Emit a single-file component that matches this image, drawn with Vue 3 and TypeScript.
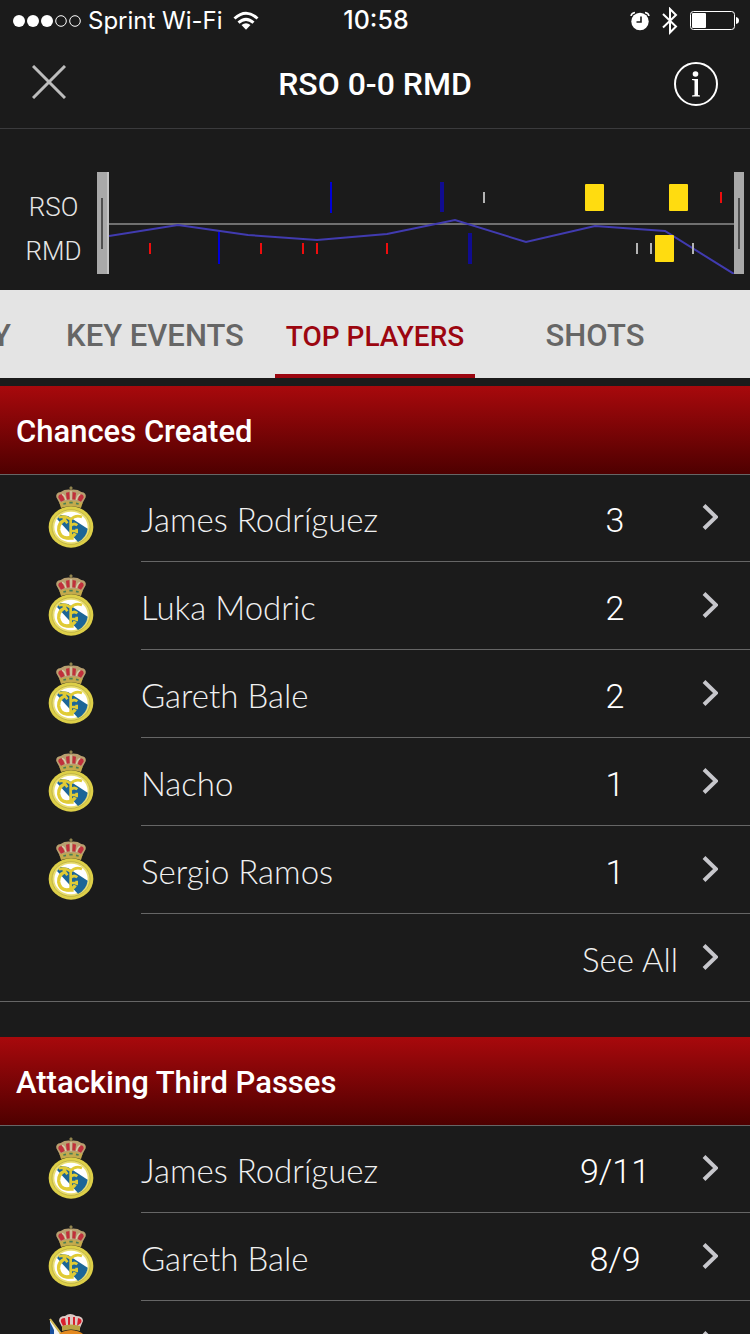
<script setup lang="ts">
interface Player { name: string; value?: string; club: 'rmd' | 'rso' }
interface Section { title: string; players: Player[]; seeAll: boolean }
interface Mark { x: number; y: number; w: number; h: number; kind: string }

const tabs = ['SUMMARY', 'KEY EVENTS', 'TOP PLAYERS', 'SHOTS']
const activeTab = 'TOP PLAYERS'

const sections: Section[] = [
  {
    title: 'Chances Created',
    seeAll: true,
    players: [
      { name: 'James Rodríguez', value: '3', club: 'rmd' },
      { name: 'Luka Modric', value: '2', club: 'rmd' },
      { name: 'Gareth Bale', value: '2', club: 'rmd' },
      { name: 'Nacho', value: '1', club: 'rmd' },
      { name: 'Sergio Ramos', value: '1', club: 'rmd' },
    ],
  },
  {
    title: 'Attacking Third Passes',
    seeAll: false,
    players: [
      { name: 'James Rodríguez', value: '9/11', club: 'rmd' },
      { name: 'Gareth Bale', value: '8/9', club: 'rmd' },
      { name: 'Xabi Prieto', club: 'rso' },
    ],
  },
]

const marks: Mark[] = [
  { x: 221, y: 10, w: 2, h: 31, kind: 'goalchance' },
  { x: 331, y: 10, w: 4, h: 30, kind: 'sub' },
  { x: 374, y: 20, w: 2, h: 11, kind: 'foul' },
  { x: 476, y: 12, w: 19, h: 27, kind: 'card' },
  { x: 560, y: 12, w: 19, h: 27, kind: 'card' },
  { x: 611, y: 20, w: 2, h: 11, kind: 'shot' },
  { x: 40, y: 71, w: 2, h: 11, kind: 'shot' },
  { x: 109, y: 60, w: 2, h: 32, kind: 'goalchance' },
  { x: 151, y: 71, w: 2, h: 11, kind: 'shot' },
  { x: 193, y: 71, w: 2, h: 11, kind: 'shot' },
  { x: 207, y: 71, w: 2, h: 11, kind: 'shot' },
  { x: 277, y: 71, w: 2, h: 11, kind: 'shot' },
  { x: 359, y: 61, w: 4, h: 31, kind: 'sub' },
  { x: 527, y: 71, w: 2, h: 11, kind: 'foul' },
  { x: 541, y: 71, w: 2, h: 11, kind: 'foul' },
  { x: 546, y: 63, w: 19, h: 27, kind: 'card' },
  { x: 583, y: 71, w: 2, h: 11, kind: 'foul' },
]
</script>

<template>
  <div class="screen">
    <div class="status">
      <div class="carrier">
        <svg width="68" height="14" viewBox="0 0 68 14" aria-hidden="true">
          <g fill="#fff"><circle cx="6" cy="7" r="6" /><circle cx="20" cy="7" r="6" /><circle cx="34" cy="7" r="6" /></g>
          <g fill="none" stroke="#fff"><circle cx="48" cy="7" r="5.300" /><circle cx="62" cy="7" r="5.300" /></g>
        </svg>
        <span class="network">Sprint Wi-Fi</span>
        <svg width="26" height="20" viewBox="0 0 26 20" aria-hidden="true">
          <g fill="none" stroke="#fff" stroke-width="3">
            <path d="M1.500 7.500Q13 -3 24.500 7.500" /><path d="M5.500 11.700Q13 5 20.500 11.700" />
          </g>
          <path d="M8.500 14Q13 10.500 17.500 14L13 18.700Z" fill="#fff" />
        </svg>
      </div>
      <span class="clock">10:58</span>
      <div class="indicators">
        <svg width="20" height="20" viewBox="0 0 20 20" aria-hidden="true">
          <circle cx="10" cy="10.500" r="8.700" fill="#fff" />
          <path d="M1 5Q1.500 2 5 1.500M15 1.500Q18.500 2 19 5" fill="none" stroke="#fff" stroke-width="1.500" />
          <path d="M11 5.500V11H6.500" fill="none" stroke="#1b1b1b" stroke-width="1.600" />
        </svg>
        <svg width="16" height="28" viewBox="0 0 16 28" aria-hidden="true">
          <path d="M1 7L14 19.500L8 25.500V2L14 8L1 20.500" fill="none" stroke="#fff" stroke-width="2" />
        </svg>
        <svg width="49" height="20" viewBox="0 0 49 20" aria-hidden="true">
          <rect x="0.500" y="0.500" width="44" height="18" rx="3" fill="none" stroke="#fff" />
          <rect x="2" y="2" width="14" height="15" rx="1" fill="#fff" />
          <path d="M46 6Q49 6.500 49 9.500T46 13Z" fill="#fff" />
        </svg>
      </div>
    </div>

    <header class="bar">
      <button class="icon-btn close" type="button" aria-label="Close">
        <svg width="34" height="34" viewBox="0 0 34 34"><path d="M1 1L33 33M33 1L1 33" stroke="#bdbdbd" stroke-width="3" /></svg>
      </button>
      <h1>RSO 0-0 RMD</h1>
      <button class="icon-btn info" type="button" aria-label="Match information">
        <svg width="44" height="44" viewBox="0 0 44 44" fill="#fff">
          <circle cx="22" cy="22" r="21" fill="none" stroke="#fff" stroke-width="2" />
          <circle cx="21.500" cy="12" r="2.800" />
          <path d="M18 17H24V33L26 33.500V34.500H18V33.500L20.500 33V18.500L18 18Z" />
        </svg>
      </button>
    </header>

    <section class="timeline" aria-label="Match timeline">
      <div class="teams"><span>RSO</span><span>RMD</span></div>
      <div class="handle start"></div>
      <svg class="chart" viewBox="0 0 625 102" preserveAspectRatio="none">
        <rect x="0" y="51" width="625" height="2" fill="#707070" />
        <polyline points="0,64 69,53 139,63 208,68 278,62 346,48 417,70 486,54 556,59 625,102" />
        <rect v-for="(m, i) in marks" :key="i" :class="m.kind" :x="m.x" :y="m.y" :width="m.w" :height="m.h" :rx="m.kind === 'card' ? 1 : 0" />
      </svg>
      <div class="handle"></div>
    </section>

    <nav class="tabs">
      <button v-for="t in tabs" :key="t" type="button" :class="{ active: t === activeTab }">{{ t }}</button>
    </nav>

    <main>
      <section v-for="s in sections" :key="s.title" class="block">
        <h2>{{ s.title }}</h2>
        <ul>
          <li v-for="p in s.players" :key="p.name">
            <a href="#" class="row">
              <span class="crest">
                <svg v-if="p.club === 'rmd'" width="46" height="62" viewBox="24 18 138 186" aria-hidden="true">
                  <path d="M60 72L49 52Q46 38 62 36Q74 27 93 29Q112 27 124 36Q140 38 137 52L126 72Q93 64 60 72Z" fill="#b9a070" />
                  <path d="M55 53Q54 42 67 43L74 60L63 65ZM78 38L88 36L89 58L80 59ZM98 36L108 38L106 59L97 58ZM119 43Q132 42 131 53L123 65L113 60Z" fill="#c0303c" />
                  <path d="M66 43Q75 46 78 60M93 33V60M121 43Q112 46 109 60" fill="none" stroke="#d8caac" stroke-width="4" />
                  <path d="M58 68Q93 58 128 68L123 84Q93 74 63 84Z" fill="#c4aa4c" />
                  <path d="M70 72L78 70M88 68H98M108 70L116 72" stroke="#4a7f55" stroke-width="5" />
                  <path d="M93 19V31M88 24H98" stroke="#b9a860" stroke-width="3" />
                  <ellipse cx="93" cy="141" rx="67" ry="62" fill="#ddcf48" />
                  <ellipse cx="93" cy="141" rx="57" ry="52" fill="#eadf70" stroke="#b0a540" stroke-width="2" />
                  <ellipse cx="93" cy="141" rx="50" ry="46" fill="#fff" />
                  <path d="M51 117L62 105L84 108L143 146Q140 172 114 186Z" fill="#1c6597" />
                  <path d="M74 120Q54 130 56 150Q59 172 80 174Q98 173 106 160" fill="none" stroke="#e0cb35" stroke-width="10" />
                  <path d="M56 112Q78 105 92 119Q106 103 126 111M92 119V174M82 175H101M70 112L82 130M92 138Q101 127 112 136M92 153H110M110 146V160" fill="none" stroke="#e0cb35" stroke-width="8" />
                </svg>
                <svg v-else width="46" height="62" viewBox="0 0 46 62" aria-hidden="true">
                  <path d="M2 7L13 21V62H2Z" fill="#f4f4f4" /><path d="M2 9L6 17V62H2Z" fill="#174f9d" />
                  <path d="M2 6L14 22" stroke="#d1b957" stroke-width="2" />
                  <circle cx="23" cy="37" r="20" fill="#e48a20" />
                  <path d="M14 14L11 8Q11 3 17 3Q22 -1 28 3Q35 3 35 8L32 15Q23 12 14 14Z" fill="#dcc9c4" />
                  <path d="M13 9Q12 5 17 5L18 12L15 13ZM20 4H22V12H20ZM25 4H27V12H25ZM30 5Q35 6 33 10L29 13Z" fill="#d8202c" />
                  <path d="M14 13Q23 10 32 13V18Q23 15 14 18Z" fill="#b9a344" />
                </svg>
              </span>
              <span class="line">
                <span class="name">{{ p.name }}</span>
                <span class="value">{{ p.value }}</span>
                <svg class="chev" width="16" height="26" viewBox="0 0 16 26" aria-hidden="true"><path d="M2 1.500L14 13L2 24.500" /></svg>
              </span>
            </a>
          </li>
        </ul>
        <a v-if="s.seeAll" href="#" class="see-all">
          <span>See All</span>
          <svg class="chev" width="16" height="26" viewBox="0 0 16 26" aria-hidden="true"><path d="M2 1.500L14 13L2 24.500" /></svg>
        </a>
      </section>
    </main>
  </div>
</template>

<style>
body { background: #1b1b1b; }
</style>

<style scoped>
.screen {
  display: flex;
  flex-direction: column;
  height: 100vh;
  overflow: hidden;
  background: #1b1b1b;
  color: #fff;
  font-family: Roboto, "Liberation Sans", sans-serif;
}
.screen * { box-sizing: border-box; }
svg { display: block; flex: none; }
button { border: 0; padding: 0; background: none; font: inherit; color: inherit; cursor: pointer; }
a { color: inherit; text-decoration: none; }
h1, h2, ul { margin: 0; padding: 0; }
ul { list-style: none; }

.status {
  display: grid;
  grid-template-columns: 1fr auto 1fr;
  align-items: center;
  flex: none;
  height: 40px;
  padding: 1px 11px 0 13px;
  font-family: Inter, Roboto, sans-serif;
  font-size: 24px;
  line-height: 39px;
}
.carrier, .indicators { display: flex; align-items: center; }
.network { margin: 0 10px 0 7px; }
.clock { font-size: 25px; font-weight: 500; }
.indicators { justify-content: flex-end; gap: 12px; }

.bar {
  display: grid;
  grid-template-columns: 1fr auto 1fr;
  align-items: center;
  flex: none;
  height: 89px;
  padding: 0 32px;
  border-bottom: 1px solid #3b3b3d;
}
.bar h1 { font-size: 32px; line-height: 40px; font-weight: 500; }
.info { justify-self: end; }
.icon-btn { width: fit-content; }
.close { padding-bottom: 4px; }

.timeline {
  display: flex;
  flex: none;
  padding: 43px 6px 16px 0;
}
.teams {
  display: flex;
  flex-direction: column;
  align-items: center;
  width: 97px;
  padding: 13px 0 0 10px;
  font-size: 26px;
  line-height: 44px;
  font-weight: 300;
  color: #e6e6e6;
}
.handle {
  display: flex;
  align-items: center;
  justify-content: center;
  width: 10px;
  height: 102px;
  background: #a9a9a9;
}
.handle.start { width: 12px; border-right: 2px solid #c4c4c4; }
.handle::before { content: ""; width: 2px; height: 51px; background: #505050; }
.chart { flex: 1; min-width: 0; height: 102px; }
.chart polyline { fill: none; stroke: #413bb0; stroke-width: 2; }
.goalchance { fill: #0000d8; }
.sub { fill: #100c90; }
.foul { fill: #b4b4b4; }
.shot { fill: #ee0d0d; }
.card { fill: #ffdc10; }

.tabs {
  display: flex;
  justify-content: center;
  gap: 20px;
  flex: none;
  height: 88px;
  padding-right: 220px;
  overflow: hidden;
  background: #e4e4e4;
}
.tabs button {
  flex: none;
  width: 200px;
  padding-top: 6px;
  border-bottom: 4px solid transparent;
  font-size: 31px;
  font-weight: 500;
  color: #666;
}
.tabs button.active { border-color: #9c0610; font-size: 28px; padding-top: 8px; color: #9c0610; }

main { flex: 1; min-height: 0; overflow: hidden; padding-top: 8px; }
.block { margin-bottom: 35px; }
.block h2 {
  position: relative;
  padding: 4px 16px 0;
  font-size: 31px;
  line-height: 84px;
  font-weight: 500;
  background: linear-gradient(#a8090c, #4e0000);
  box-shadow: 0 1px 0 #666;
}
.row { display: flex; height: 88px; }
.crest { flex: none; width: 141px; padding: 12px 0 0 48px; }
.line {
  display: flex;
  align-items: center;
  flex: 1;
  min-width: 0;
  padding: 0 32px 0 0;
  border-bottom: 1px solid #666;
}
.name, .value, .see-all span { font-size: 34px; line-height: 40px; font-weight: 300; padding-top: 4px; }
.name, .see-all span { padding-top: 2px; font-family: Lato, Roboto, sans-serif; font-size: 33px; color: #f0f0f0; }
.name { flex: 1; }
.value { width: 120px; margin-right: 27px; text-align: center; }
.chev { margin-bottom: 2px; }
.chev path { fill: none; stroke: #c7c7cc; stroke-width: 4; }
.see-all {
  display: flex;
  align-items: center;
  justify-content: flex-end;
  gap: 24px;
  height: 88px;
  padding-right: 32px;
  border-bottom: 1px solid #666;
}
</style>
